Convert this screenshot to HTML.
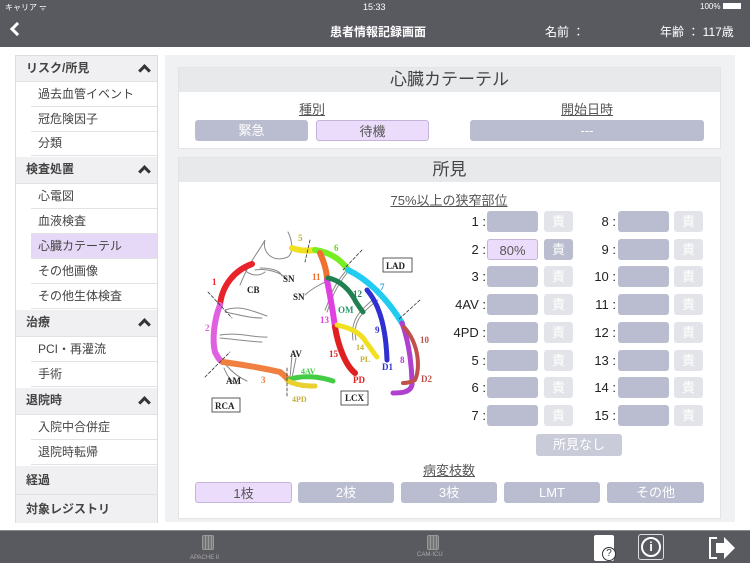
<!DOCTYPE html>
<html><head><meta charset="utf-8">
<style>
*{margin:0;padding:0;box-sizing:border-box}
body{width:750px;height:563px;overflow:hidden;background:#fff;font-family:"Liberation Sans","Noto Sans CJK JP",sans-serif;position:relative;color:#333}
.a{position:absolute}
.top{left:0;top:0;width:750px;height:47px;background:#595960}
.bot{left:0;top:530px;width:750px;height:33px;background:#595960;border-top:1px solid #888}
.w{color:#fff}
.side{left:15px;top:55px;width:143px;height:468px;border:1px solid #ddd;background:#fff}
.row{position:absolute;left:0;width:141px;font-size:12px;border-bottom:1px solid #e2e2e4;line-height:24px}
.h{background:#f0f0f2;padding-left:10px;font-weight:bold;color:#444}
.s{left:15px;width:126px;padding-left:7px;color:#444}
.chev{position:absolute;right:8px;width:9px;height:9px;border-left:3px solid #333;border-top:3px solid #333;transform:rotate(45deg);top:10px}
.main{left:165px;top:55px;width:570px;height:467px;background:#f0f1f3}
.pan{background:#fff;border:1px solid #e4e4e6}
.ph{background:#e8e9eb;text-align:center;font-size:17px;color:#444;line-height:24px}
.btn{position:absolute;height:21px;border-radius:3px;background:#b9bdcf;color:#fff;font-size:13px;text-align:center;line-height:21px}
.pur{background:#ecdcfb;border:1px solid #c6b3d9;color:#555}
.lt{background:#e3e4ea;color:#fff}
.ul{text-decoration:underline;font-size:13px;color:#555;text-align:center}
.lbl{position:absolute;font-size:13px;color:#222;text-align:right;width:50px;line-height:21px}
</style></head><body>
<div class="a top">
<div class="a w" style="left:5px;top:2px;font-size:8px">キャリア ᯤ</div>
<div class="a w" style="left:363px;top:2px;font-size:9px">15:33</div>
<div class="a w" style="left:700px;top:2px;font-size:8px">100% <span style="display:inline-block;width:18px;height:6px;background:#fff"></span></div>
<div class="a" style="left:12px;top:24px;width:10px;height:10px;border-left:3px solid #fff;border-bottom:3px solid #fff;transform:rotate(45deg)"></div>
<div class="a w" style="left:330px;top:23px;font-size:12px;font-weight:bold">患者情報記録画面</div>
<div class="a w" style="left:545px;top:23px;font-size:12px">名前 ：</div>
<div class="a w" style="left:660px;top:23px;font-size:12px">年齢 ： 117歳</div>
</div>

<div class="a side">
<div class="row h" style="top:0;height:26px">リスク/所見<span class="chev"></span></div>
<div class="row s" style="top:26px">過去血管イベント</div>
<div class="row s" style="top:51px">冠危険因子</div>
<div class="row s" style="top:75px">分類</div>
<div class="row h" style="top:101px;height:27px">検査処置<span class="chev"></span></div>
<div class="row s" style="top:128px">心電図</div>
<div class="row s" style="top:153px">血液検査</div>
<div class="row s" style="top:178px;background:#e6d8f7">心臓カテーテル</div>
<div class="row s" style="top:203px">その他画像</div>
<div class="row s" style="top:228px">その他生体検査</div>
<div class="row h" style="top:254px;height:27px">治療<span class="chev"></span></div>
<div class="row s" style="top:281px">PCI・再灌流</div>
<div class="row s" style="top:306px">手術</div>
<div class="row h" style="top:332px;height:27px">退院時<span class="chev"></span></div>
<div class="row s" style="top:359px">入院中合併症</div>
<div class="row s" style="top:384px">退院時転帰</div>
<div class="row h" style="top:410px;height:29px;line-height:28px">経過</div>
<div class="row h" style="top:439px;height:28px;line-height:28px;border-bottom:none">対象レジストリ</div>
</div>

<div class="a main"></div>
<div class="a pan" style="left:178px;top:67px;width:543px;height:82px">
<div class="ph">心臓カテーテル</div>
<div class="a ul" style="left:80px;top:31px;width:106px">種別</div>
<div class="a ul" style="left:350px;top:31px;width:116px">開始日時</div>
<div class="btn" style="left:16px;top:52px;width:113px">緊急</div>
<div class="btn pur" style="left:137px;top:52px;width:113px">待機</div>
<div class="btn" style="left:291px;top:52px;width:234px">---</div>
</div>

<div class="a pan" style="left:178px;top:157px;width:543px;height:362px">
<div class="ph">所見</div>
<div class="a ul" style="left:170px;top:32px;width:200px">75%以上の狭窄部位</div>
<div class="a ul" style="left:200px;top:302px;width:140px">病変枝数</div>
<div class="btn lt" style="left:357px;top:276px;width:86px;background:#c9ccd8;height:22px">所見なし</div>
<div class="btn pur" style="left:16px;top:324px;width:97px">1枝</div>
<div class="btn" style="left:119px;top:324px;width:96px">2枝</div>
<div class="btn" style="left:222px;top:324px;width:96px">3枝</div>
<div class="btn" style="left:325px;top:324px;width:96px">LMT</div>
<div class="btn" style="left:428px;top:324px;width:97px">その他</div>
</div>

<div class="a" style="left:0;top:0">
<div class="lbl" style="left:436px;top:211px">1 :</div><div class="btn" style="left:487px;top:211px;width:51px"></div><div class="btn lt" style="left:544px;top:211px;width:29px">責</div>
<div class="lbl" style="left:436px;top:239px">2 :</div><div class="btn pur" style="left:487px;top:239px;width:51px">80%</div><div class="btn" style="left:544px;top:239px;width:29px">責</div>
<div class="lbl" style="left:436px;top:266px">3 :</div><div class="btn" style="left:487px;top:266px;width:51px"></div><div class="btn lt" style="left:544px;top:266px;width:29px">責</div>
<div class="lbl" style="left:436px;top:294px">4AV :</div><div class="btn" style="left:487px;top:294px;width:51px"></div><div class="btn lt" style="left:544px;top:294px;width:29px">責</div>
<div class="lbl" style="left:436px;top:322px">4PD :</div><div class="btn" style="left:487px;top:322px;width:51px"></div><div class="btn lt" style="left:544px;top:322px;width:29px">責</div>
<div class="lbl" style="left:436px;top:350px">5 :</div><div class="btn" style="left:487px;top:350px;width:51px"></div><div class="btn lt" style="left:544px;top:350px;width:29px">責</div>
<div class="lbl" style="left:436px;top:377px">6 :</div><div class="btn" style="left:487px;top:377px;width:51px"></div><div class="btn lt" style="left:544px;top:377px;width:29px">責</div>
<div class="lbl" style="left:436px;top:405px">7 :</div><div class="btn" style="left:487px;top:405px;width:51px"></div><div class="btn lt" style="left:544px;top:405px;width:29px">責</div>

<div class="lbl" style="left:566px;top:211px">8 :</div><div class="btn" style="left:618px;top:211px;width:51px"></div><div class="btn lt" style="left:674px;top:211px;width:29px">責</div>
<div class="lbl" style="left:566px;top:239px">9 :</div><div class="btn" style="left:618px;top:239px;width:51px"></div><div class="btn lt" style="left:674px;top:239px;width:29px">責</div>
<div class="lbl" style="left:566px;top:266px">10 :</div><div class="btn" style="left:618px;top:266px;width:51px"></div><div class="btn lt" style="left:674px;top:266px;width:29px">責</div>
<div class="lbl" style="left:566px;top:294px">11 :</div><div class="btn" style="left:618px;top:294px;width:51px"></div><div class="btn lt" style="left:674px;top:294px;width:29px">責</div>
<div class="lbl" style="left:566px;top:322px">12 :</div><div class="btn" style="left:618px;top:322px;width:51px"></div><div class="btn lt" style="left:674px;top:322px;width:29px">責</div>
<div class="lbl" style="left:566px;top:350px">13 :</div><div class="btn" style="left:618px;top:350px;width:51px"></div><div class="btn lt" style="left:674px;top:350px;width:29px">責</div>
<div class="lbl" style="left:566px;top:377px">14 :</div><div class="btn" style="left:618px;top:377px;width:51px"></div><div class="btn lt" style="left:674px;top:377px;width:29px">責</div>
<div class="lbl" style="left:566px;top:405px">15 :</div><div class="btn" style="left:618px;top:405px;width:51px"></div><div class="btn lt" style="left:674px;top:405px;width:29px">責</div>
</div>

<svg class="a" style="left:0;top:0" width="750" height="563" fill="none" stroke-linecap="round">
<g stroke="#888" stroke-width="1">
<path d="M240 285 C250 260 260 250 265 240 C262 250 270 262 285 258 C295 256 292 240 288 232"/>
<path d="M245 265 C240 270 255 280 265 272 M255 270 C265 268 280 272 286 278 M260 268 C270 268 280 270 282 276"/>
<path d="M225 310 C240 305 250 310 267 316 M225 312 C240 315 250 318 262 318"/>
<path d="M220 335 C240 332 255 338 267 337 M220 338 C240 340 255 342 262 342"/>
<path d="M226 365 C232 372 240 378 247 381 M224 368 C228 378 232 382 237 384"/>
<path d="M290 378 L292 355 M292 378 L296 358"/>
<path d="M345 272 C330 290 330 300 325 310 M347 273 C332 292 330 305 327 312"/>
<path d="M375 298 C360 310 350 320 353 340 M378 300 C362 312 352 322 356 340"/>
<path d="M330 280 C320 284 310 290 305 295"/>
</g>
<g stroke-width="6">
<path stroke="#e8232a" d="M252 264 C235 270 222 285 220 305"/>
<path stroke="#e060e0" d="M220 305 C214 320 212 340 215 352 C218 358 220 361 223 362"/>
<path stroke="#f08040" d="M223 362 C245 365 262 368 280 372 C285 376 287 378 288 380"/>
<path stroke="#44cc44" stroke-width="5" d="M288 380 C300 375 318 376 333 381"/>
<path stroke="#e8d030" stroke-width="5" d="M288 381 C298 386 308 386 315 386"/>
<path stroke="#f0e020" d="M292 248 C300 251 308 251 315 250"/>
<path stroke="#77ee22" d="M315 250 C328 252 340 258 348 270"/>
<path stroke="#22ccf0" d="M348 270 C365 278 385 295 402 323"/>
<path stroke="#b040d0" stroke-width="5" d="M402 323 C410 345 412 370 412 385 C410 393 400 393 393 393"/>
<path stroke="#c0504a" stroke-width="4" d="M404 327 C420 345 420 370 415 380 C410 383 405 383 403 383"/>
<path stroke="#3030d0" stroke-width="5" d="M367 290 C380 305 386 330 387 360"/>
<path stroke="#f07030" d="M320 253 C324 262 327 272 327 280"/>
<path stroke="#e040e0" d="M327 280 C330 295 333 312 335 327"/>
<path stroke="#e02020" d="M335 327 C338 345 345 365 355 373"/>
<path stroke="#f0e020" stroke-width="5" d="M337 325 C350 328 360 332 366 342 C372 350 375 355 377 357"/>
<path stroke="#208050" stroke-width="5" d="M328 278 C340 280 350 290 356 302 C360 308 362 311 363 312"/>
</g>
<g stroke="#333" stroke-width="0.8" stroke-dasharray="3,2">
<path d="M208 292 L232 318 M205 377 L230 352 M287 368 L287 398 M310 240 L305 262 M362 250 L343 270 M420 300 L398 320"/>
</g>
<g font-family="Liberation Serif,serif" font-size="9" font-weight="bold" stroke="none">
<text x="212" y="285" fill="#e8232a">1</text><text x="205" y="331" fill="#e060e0">2</text>
<text x="261" y="383" fill="#f08040">3</text><text x="301" y="374" fill="#44cc44" font-size="8">4AV</text>
<text x="292" y="402" fill="#c8b040" font-size="8">4PD</text><text x="298" y="241" fill="#c0b030">5</text>
<text x="334" y="251" fill="#77cc22">6</text><text x="380" y="290" fill="#22aae0">7</text>
<text x="400" y="363" fill="#b040d0">8</text><text x="375" y="333" fill="#3030d0">9</text>
<text x="420" y="343" fill="#c0504a">10</text><text x="312" y="280" fill="#f07030">11</text>
<text x="353" y="297" fill="#208050">12</text><text x="320" y="323" fill="#e040e0">13</text>
<text x="356" y="350" fill="#c0b030" font-size="8">14</text><text x="360" y="362" fill="#c0b030" font-size="8">PL</text>
<text x="329" y="357" fill="#e02020">15</text><text x="353" y="383" fill="#e02020">PD</text>
<text x="382" y="370" fill="#3030d0">D1</text><text x="421" y="382" fill="#c0504a">D2</text>
<text x="338" y="313" fill="#2a9a6a">OM</text>
<g fill="#222"><text x="247" y="293">CB</text><text x="283" y="282">SN</text><text x="293" y="300">SN</text><text x="290" y="357">AV</text><text x="226" y="384">AM</text>
<text x="386" y="269">LAD</text><text x="215" y="409">RCA</text><text x="345" y="401">LCX</text></g>
</g>
<g stroke="#333" stroke-width="0.8"><rect x="383" y="258" width="29" height="14"/><rect x="212" y="398" width="28" height="14"/><rect x="341" y="391" width="27" height="14"/></g>
</svg>

<div class="a bot">
<div class="a" style="left:202px;top:4px;width:12px;height:15px;border:1px solid #999;border-radius:2px;background:repeating-linear-gradient(90deg,#777 0 2px,#999 2px 3px)"></div>
<div class="a" style="left:190px;top:21px;font-size:6px;color:#aaa">APACHEⅡ</div>
<div class="a" style="left:427px;top:4px;width:12px;height:15px;border:1px solid #999;border-radius:2px;background:repeating-linear-gradient(90deg,#777 0 2px,#999 2px 3px)"></div>
<div class="a" style="left:417px;top:21px;font-size:6px;color:#aaa">CAM-ICU</div>
<div class="a" style="left:594px;top:4px;width:20px;height:26px;background:#fff;border-radius:2px"></div>
<div class="a" style="left:602px;top:16px;width:14px;height:14px;border:1.5px solid #333;border-radius:50%;background:#fff;font-size:10px;text-align:center;line-height:11px;color:#333">?</div>
<div class="a" style="left:638px;top:3px;width:26px;height:26px;border:1.5px solid #ddd;border-radius:3px"></div>
<div class="a" style="left:641px;top:6px;width:20px;height:20px;border:2px solid #fff;border-radius:50%;color:#fff;font-size:13px;font-weight:bold;text-align:center;line-height:16px">i</div>
<div class="a" style="left:709px;top:6px;width:8px;height:22px;border:2px solid #fff;border-right:none"></div>
<svg class="a" style="left:713px;top:5px" width="24" height="24"><path d="M3 7 H11 V1 L22 12 L11 23 V17 H3 Z" fill="#fff"/></svg>
</div>
</body></html>
